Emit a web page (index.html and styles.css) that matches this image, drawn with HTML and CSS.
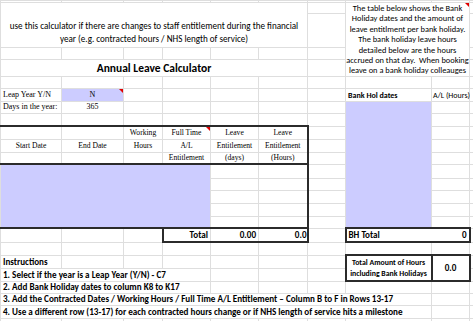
FILE: index.html
```html
<!DOCTYPE html>
<html>
<head>
<meta charset="utf-8">
<link rel="stylesheet" href="styles.css">
</head>
<body>
<table class="sheet">
<colgroup>
<col class="c61"><col class="c62"><col class="c39"><col class="c48"><col class="c48"><col class="c49"><col class="c38"><col class="c86"><col class="c38"><col class="c4">
</colgroup>
<tr class="h2"><td></td><td></td><td></td><td></td><td></td><td></td><td></td><td></td><td></td><td></td></tr>
<tr class="h11"><td colspan="6" rowspan="2" class="intro">use this calculator if there are changes to staff entitlement during the financial<br>year (e.g. contracted hours / NHS length of service)</td><td></td><td colspan="2" rowspan="4" class="note cm">The table below shows the Bank<br>Holiday dates and the amount of<br>leave entitlment per bank holiday.<br>The bank holiday leave hours<br>detailed below are the hours<br>accrued on that day.&nbsp; When booking<br>leave on a bank holiday colleauges</td><td></td></tr>
<tr class="h33"><td></td><td></td></tr>
<tr class="h12"><td></td><td></td><td></td><td></td><td></td><td></td><td></td><td></td></tr>
<tr class="h17"><td colspan="6" class="title">Annual Leave Calculator</td><td></td><td></td></tr>
<tr class="h12"><td></td><td></td><td></td><td></td><td></td><td></td><td></td><td></td><td></td><td></td></tr>
<tr class="h13"><td class="serif">Leap Year Y/N</td><td class="serif ctr purple cm">N</td><td></td><td></td><td></td><td></td><td></td><td class="bold s8">Bank Hol dates</td><td class="s8 tight">A/L (Hours)</td><td></td></tr>
<tr class="h12"><td class="serif">Days in the year:</td><td class="serif ctr">365</td><td></td><td></td><td></td><td></td><td></td><td rowspan="10" class="purple"></td><td></td><td></td></tr>
<tr class="h13"><td></td><td></td><td></td><td></td><td></td><td></td><td></td><td></td><td></td></tr>
<tr class="h13 hd"><td class="tt"></td><td class="tt"></td><td class="tt">Working</td><td class="tt cm">Full Time</td><td class="tt">Leave</td><td class="tt tr">Leave</td><td></td><td></td><td></td></tr>
<tr class="h13 hd"><td>Start Date</td><td>End Date</td><td>Hours</td><td>A/L</td><td>Entitlement</td><td class="tr">Entitlement</td><td></td><td></td><td></td></tr>
<tr class="h12 hd"><td class="tb"></td><td class="tb"></td><td class="tb"></td><td class="tb">Entitlement</td><td class="tb">(days)</td><td class="tb tr">(Hours)</td><td></td><td></td><td></td></tr>
<tr class="h14"><td colspan="4" rowspan="5" class="purple tb"></td><td></td><td class="tr"></td><td></td><td></td><td></td></tr>
<tr class="h12"><td></td><td class="tr"></td><td></td><td></td><td></td></tr>
<tr class="h13"><td></td><td class="tr"></td><td></td><td></td><td></td></tr>
<tr class="h13"><td></td><td class="tr"></td><td></td><td></td><td></td></tr>
<tr class="h12"><td class="tb"></td><td class="tr tb"></td><td></td><td></td><td></td></tr>
<tr class="h14"><td></td><td></td><td></td><td class="tl tb bold rgt">Total</td><td class="tb bold rgt">0.00</td><td class="tb tr bold rgt flush">0.0</td><td></td><td colspan="2" class="box bold"><div class="split"><span>BH Total</span><span>0</span></div></td><td></td></tr>
<tr class="h13"><td></td><td></td><td></td><td></td><td></td><td></td><td></td><td></td><td></td><td></td></tr>
<tr class="h13"><td class="bold">Instructions</td><td></td><td></td><td></td><td></td><td></td><td></td><td rowspan="2" class="box bold ctr small">Total Amount of Hours<br>including Bank Holidays</td><td rowspan="2" class="box bold ctr">0.0</td><td></td></tr>
<tr class="h13"><td colspan="4" class="bold">1. Select if the year is a Leap Year (Y/N) - C7</td><td></td><td></td><td></td><td></td></tr>
<tr class="h12"><td colspan="4" class="bold">2. Add Bank Holiday dates to column K8 to K17</td><td></td><td></td><td></td><td></td><td></td><td></td></tr>
<tr class="h12"><td colspan="8" class="bold">3. Add the Contracted Dates / Working Hours / Full Time A/L Entitlement – Column B to F in Rows 13-17</td><td></td><td></td></tr>
<tr class="h13"><td colspan="8" class="bold">4. Use a different row (13-17) for each contracted hours change or if NHS length of service hits a milestone</td><td></td><td></td></tr>
<tr class="h13"><td></td><td></td><td></td><td></td><td></td><td></td><td></td><td></td><td></td><td></td></tr>
</table>
</body>
</html>
```
FILE: styles.css
```css
html, body {
  margin: 0;
  padding: 0;
  background: #fff;
}
.sheet {
  border-collapse: collapse;
  table-layout: fixed;
  width: 473px;
  font-family: Carlito, Lato, "Liberation Sans", sans-serif;
  font-size: 9.1px;
  color: #000;
}
.c61 { width: 61px; }
.c62 { width: 62px; }
.c39 { width: 39px; }
.c48 { width: 48px; }
.c49 { width: 49px; }
.c38 { width: 38px; }
.c86 { width: 86px; }
.c4 { width: 4px; }
.sheet td {
  border: 1px solid #dedede;
  padding: 0 2px;
  line-height: 10px;
  white-space: nowrap;
  overflow: hidden;
  vertical-align: middle;
}
.h2 { height: 2px; }
.h11 { height: 11px; }
.h33 { height: 33px; }
.h12 { height: 12px; }
.h13 { height: 13px; }
.h14 { height: 14px; }
.h17 { height: 17px; }
.intro {
  text-align: center;
  vertical-align: bottom !important;
  line-height: 13px !important;
  font-size: 9.1px;
  padding-bottom: 2px !important;
}
.note {
  text-align: center;
  vertical-align: top !important;
  font-size: 8.4px;
  line-height: 10.4px !important;
  padding: 0 !important;
}
.title {
  text-align: center;
  font-weight: bold;
  font-size: 11.5px;
}
.serif {
  font-family: "Liberation Serif", serif;
  font-size: 8px;
}
.hd td {
  font-family: "Liberation Serif", serif;
  font-size: 7.6px;
  text-align: center;
}
.ctr { text-align: center; }
.rgt { text-align: right; }
.bold { font-weight: bold; }
.s8 { font-size: 8px; }
.sheet td.tight { padding: 0 0 0 1px; overflow: visible; }
.small { font-size: 7.8px; line-height: 11px !important; }
.purple { background: #ccccff; }
.sheet td.tt { border-top: 2px solid #2b2b2b; }
.sheet td.tb { border-bottom: 2px solid #2b2b2b; }
.sheet td.tr { border-right: 2px solid #2b2b2b; }
.sheet td.tl { border-left: 2px solid #2b2b2b; }
.sheet td.box { border: 2px solid #2b2b2b; }
.sheet td.flush { padding-right: 0; }
.split {
  display: flex;
  justify-content: space-between;
}
.cm { position: relative; }
.cm::after {
  content: "";
  position: absolute;
  top: 0;
  right: 0;
  border-top: 4px solid #e00000;
  border-left: 4px solid transparent;
}
```
